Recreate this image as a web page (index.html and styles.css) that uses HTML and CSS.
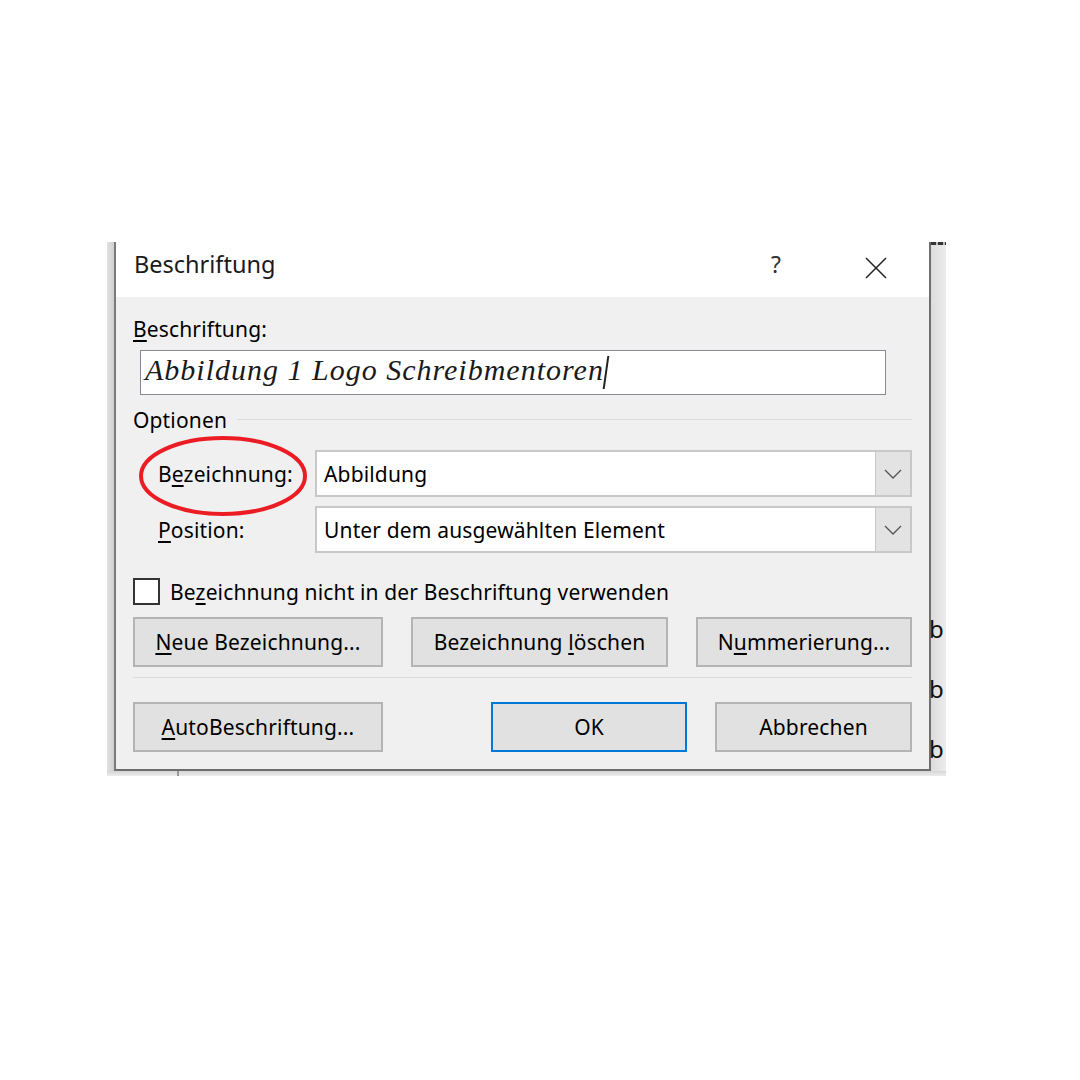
FILE: index.html
```html
<!DOCTYPE html>
<html lang="de">
<head>
<meta charset="utf-8">
<title>Beschriftung</title>
<link rel="stylesheet" href="styles.css">
</head>
<body>
<div class="shot">
  <div class="main">
    <div class="lstrip"></div>
    <div class="dialog">
      <div class="titlebar">
        <span class="title">Beschriftung</span>
        <span class="help">?</span>
        <svg class="close" width="22" height="22" viewBox="0 0 22 22"><path d="M1 1 L21 21 M21 1 L1 21" stroke="#222" stroke-width="1.5" fill="none"/></svg>
      </div>
      <div class="body">
        <div class="lbl"><u>B</u>eschriftung:</div>
        <div class="input"><span class="captext">Abbildung 1 Logo Schreibmentoren</span><span class="caret"></span></div>
        <div class="group"><span>Optionen</span><span class="gline"></span></div>
        <div class="row">
          <span class="rlbl">B<u>e</u>zeichnung:</span>
          <div class="combo"><span class="cval">Abbildung</span><span class="drop"><svg width="18" height="10" viewBox="0 0 18 10"><path d="M1 1 L9 9 L17 1" stroke="#555" stroke-width="1.3" fill="none"/></svg></span></div>
          <svg class="mark" width="170" height="84" viewBox="0 0 170 84"><ellipse cx="85" cy="42" rx="82" ry="38" stroke="#ec1c24" stroke-width="4" fill="none"/></svg>
        </div>
        <div class="row row2">
          <span class="rlbl"><u>P</u>osition:</span>
          <div class="combo"><span class="cval">Unter dem ausgewählten Element</span><span class="drop"><svg width="18" height="10" viewBox="0 0 18 10"><path d="M1 1 L9 9 L17 1" stroke="#555" stroke-width="1.3" fill="none"/></svg></span></div>
        </div>
        <div class="check"><span class="box"></span><span>Be<u>z</u>eichnung nicht in der Beschriftung verwenden</span></div>
        <div class="btnrow">
          <span class="btn w250"><span><u>N</u>eue Bezeichnung...</span></span>
          <span class="btn w257"><span>Bezeichnung <u>l</u>öschen</span></span>
          <span class="btn w216"><span>N<u>u</u>mmerierung...</span></span>
        </div>
        <div class="sep"></div>
        <div class="btnrow2">
          <span class="btn w250"><span><u>A</u>utoBeschriftung...</span></span>
          <span class="btn ok"><span>OK</span></span>
          <span class="btn w197"><span>Abbrechen</span></span>
        </div>
      </div>
    </div>
    <div class="rstrip">
      <span class="dash"></span>
      <span class="bb b1">b</span>
      <span class="bb">b</span>
      <span class="bb">b</span>
    </div>
  </div>
  <div class="bstrip"><span class="tick"></span></div>
</div>
</body>
</html>
```

FILE: styles.css
```css
html, body {
  margin: 0;
  padding: 0;
  background: #ffffff;
}
body {
  width: 1080px;
  height: 1080px;
  font-family: "Noto Sans", "Open Sans", sans-serif;
  color: #000;
}
.shot {
  padding-top: 242px;
  padding-left: 107px;
  width: 839px;
}
.main {
  display: flex;
  height: 529px;
}
.lstrip {
  width: 7px;
  background: linear-gradient(to right, #e2e2e2, #cfcfcf);
}
.dialog {
  width: 813px;
  border-left: 2px solid #7a7a7a;
  border-right: 2px solid #6e6e6e;
  border-bottom: 2px solid #6e6e6e;
  background: #f0f0f0;
  display: flex;
  flex-direction: column;
}
.rstrip {
  width: 15px;
  background: linear-gradient(to right, #dcdcdc, #ececec);
  display: flex;
  flex-direction: column;
}
.dash {
  height: 3px;
  width: 15px;
  background: repeating-linear-gradient(to right, #333 0 5px, #bbb 5px 7px);
}
.bb {
  font-family: "Noto Sans", sans-serif;
  font-size: 24px;
  line-height: 24px;
  height: 24px;
  margin-left: -2px;
  color: #111;
}
.b1 { margin-top: 372px; }
.bb + .bb { margin-top: 36px; }
.bstrip {
  height: 5px;
  background: linear-gradient(to bottom, #d6d6d6, #ececec);
  width: 839px;
  display: flex;
}
.tick {
  width: 2px;
  height: 5px;
  margin-left: 70px;
  background: #9a9a9a;
}
.titlebar {
  height: 55px;
  background: #ffffff;
  display: flex;
  align-items: center;
  padding-left: 18px;
}
.title {
  font-size: 23.5px;
  color: #1a1a1a;
  flex: 1;
  margin-top: -11px;
}
.help {
  font-size: 23px;
  color: #333;
  margin-right: 84px;
  margin-top: -12px;
}
.close {
  margin-right: 42px;
  margin-top: -4px;
}
.body {
  padding: 19px 17px 17px 17px;
  display: flex;
  flex-direction: column;
  font-size: 21px;
  letter-spacing: 0.15px;
}
.lbl {
  height: 26px;
  line-height: 26px;
}
u {
  text-decoration: underline;
  text-decoration-thickness: 1.5px;
  text-underline-offset: 3px;
}
.input {
  margin-top: 8px;
  margin-left: 7px;
  width: 739px;
  height: 43px;
  border: 1px solid #868a92;
  background: #fff;
  display: flex;
  align-items: center;
  padding-left: 5px;
  box-sizing: content-box;
}
.captext {
  font-family: "Liberation Serif", "Times New Roman", serif;
  font-style: italic;
  font-size: 30px;
  color: #1a1a1a;
  letter-spacing: 1px;
  margin-left: -1px;
  margin-top: -5px;
}
.caret {
  width: 1.5px;
  height: 33px;
  background: #222;
  margin-left: 1px;
  transform: skewX(-8deg);
}
.group {
  margin-top: 12px;
  height: 26px;
  display: flex;
  align-items: center;
}
.gline {
  flex: 1;
  height: 1px;
  background: #dcdcdc;
  margin-left: 10px;
  margin-top: -2px;
}
.row {
  margin-top: 17px;
  height: 47px;
  display: flex;
  align-items: center;
  position: relative;
}
.row2 { margin-top: 9px; }
.rlbl {
  width: 157px;
  padding-left: 25px;
}
.combo {
  flex: 1;
  height: 43px;
  border: 2px solid #c8c8c8;
  background: #fff;
  display: flex;
  align-items: center;
}
.cval {
  flex: 1;
  padding-left: 7px;
}
.drop {
  width: 34px;
  height: 43px;
  background: #e3e3e3;
  border-left: 1px solid #c8c8c8;
  display: flex;
  align-items: center;
  justify-content: center;
}
.mark {
  position: absolute;
  left: 5px;
  top: -16px;
}
.check {
  margin-top: 25px;
  height: 27px;
  display: flex;
  align-items: center;
}
.box {
  width: 23px;
  height: 23px;
  border: 2px solid #333;
  background: #fff;
  margin-right: 10px;
}
.btnrow {
  margin-top: 12px;
  display: flex;
  justify-content: space-between;
}
.btnrow2 {
  margin-top: 24px;
  display: flex;
}
.btn {
  height: 46px;
  border: 2px solid #b4b4b4;
  background: #e1e1e1;
  display: flex;
  align-items: center;
  justify-content: center;
  box-sizing: content-box;
}
.w250 { width: 246px; }
.w257 { width: 253px; }
.w216 { width: 212px; }
.w197 { width: 193px; }
.ok {
  width: 192px;
  border-color: #0078d7;
  margin-left: auto;
  margin-right: 28px;
}
.sep {
  margin-top: 10px;
  height: 1px;
  background: #dcdcdc;
}
```
